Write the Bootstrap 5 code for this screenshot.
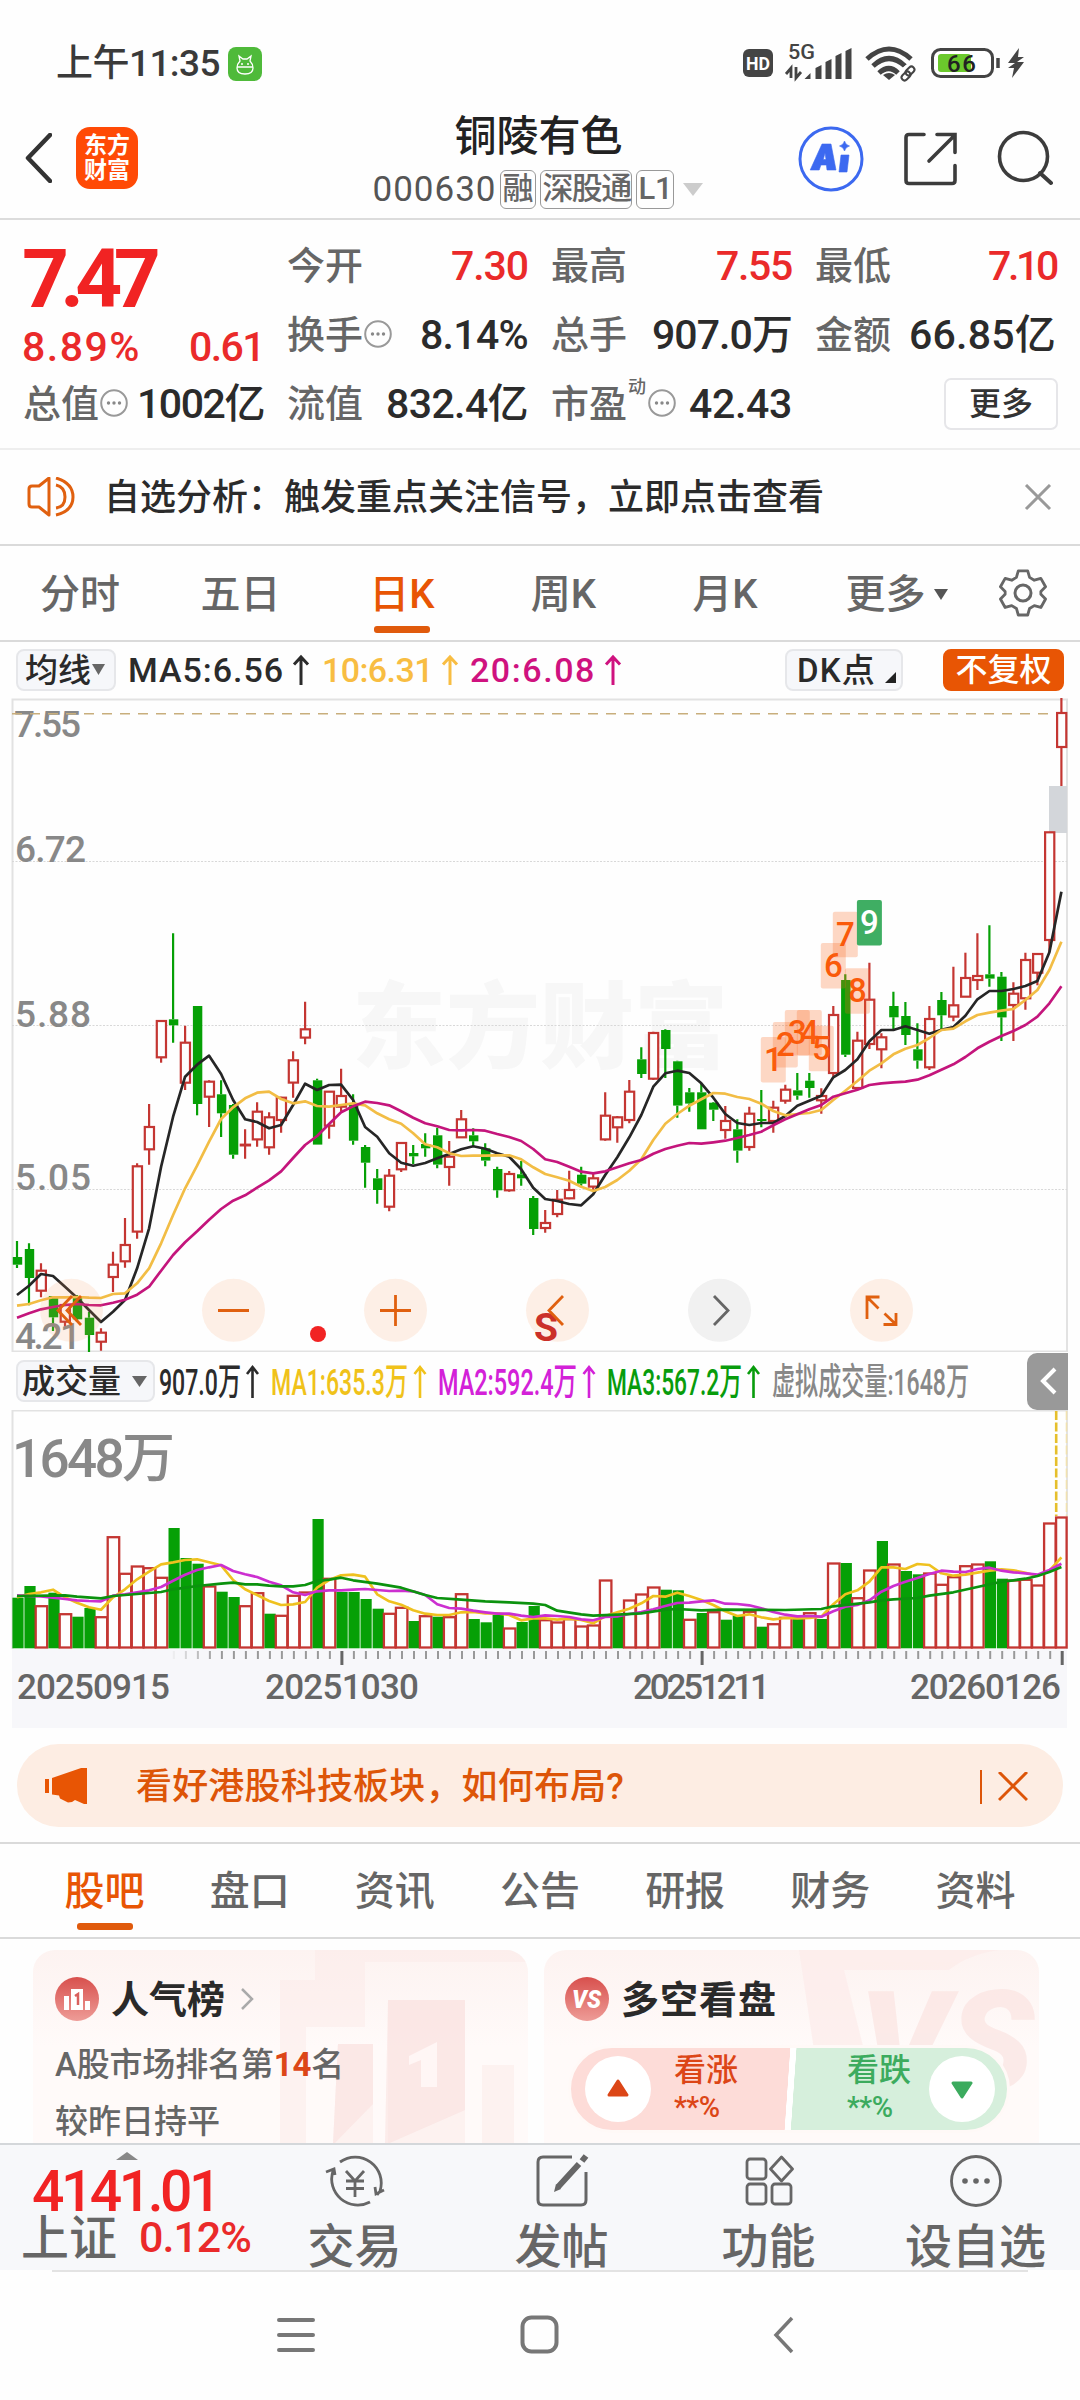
<!DOCTYPE html>
<html lang="zh-CN">
<head>
<meta charset="utf-8">
<meta name="viewport" content="width=device-width, initial-scale=1">
<title>铜陵有色 000630</title>
<link href="https://cdn.jsdelivr.net/npm/bootstrap@5.3.0/dist/css/bootstrap.min.css" rel="stylesheet">
<style>
body{font-family:Roboto,"Noto Sans CJK SC",sans-serif;font-weight:500;color:#2b2b2b;background:#fefefe;width:1080px;height:2400px;overflow:hidden;line-height:1;-webkit-font-smoothing:antialiased}
svg{display:block;flex:none}
svg text{font-family:Roboto,"Noto Sans CJK SC",sans-serif;font-weight:500}
[data-w]{display:inline-block;white-space:nowrap}
.c-up{color:#ea2a2a}
.status-row{height:84px;padding:0 55px 0 56px}
.status-time{font-size:37px;color:#3a3a3a}
.app-head{height:136px;padding:0 27px 0 24px;border-bottom:2px solid #dcdcdc}
.head-side{width:300px}
.brand-tile{width:62px;height:62px;border-radius:14px;background:#ff4a06;color:#fff;font-size:23px;line-height:25px;font-weight:700;padding-top:6px}
.stock-name{font-size:42px;line-height:50px;color:#222}
.stock-code{font-size:35px;font-weight:400;color:#555}
.tagbox{border:1.5px solid #999;border-radius:6px;color:#666;font-size:31px;height:39px;line-height:35px;padding:0 1px}
.quote-grid{display:grid;grid-template-columns:repeat(4,240px);gap:0 24px;grid-template-rows:69px 69px 69px;padding:11px 24px 0;height:230px;border-bottom:2px solid #eee}
.quote-cell{display:flex;justify-content:space-between;align-items:center;font-size:41px;margin-top:1px}
.quote-cell .lab{font-size:38px;color:#666;display:flex;align-items:center;margin-left:-1px}
.price-cell{grid-row:1/3;padding-top:14px;margin-left:-2px}
.big-price{font-size:82px;font-weight:700;line-height:68px;color:#f12323}
.more-btn{border:2px solid #e6e6e9;border-radius:7px;width:114px;height:52px;font-size:32px;line-height:49px;color:#333;text-align:center;background:#fff;margin-right:-2px}
.notice-row{height:96px;padding:2px 28px 0 27px;border-bottom:2px solid #dadada;font-size:36px;color:#2b2b2b}
.period-row{height:96px;border-bottom:2px solid #dadada;font-size:40px;color:#666}
.period-row>div,.sec-row>div{display:flex;flex-direction:column;align-items:center;justify-content:center;position:relative;height:100%;padding-top:3px}
.tab-on{color:#e85504}
.tab-on::after{content:"";position:absolute;bottom:7px;left:50%;margin-left:-28px;width:56px;height:7px;border-radius:3px;background:#e05a0c}
.ma-row{height:56px;padding:0 16px;font-size:34px}
.chip{height:42px;background:#f6f7fa;border:2px solid #e6e7ea;border-radius:8px;display:flex;align-items:center;color:#2a2a2a}
.vol-row{height:58px;padding-left:16px;padding-right:12px}
.fold-btn{width:41px;height:57px;border-radius:10px 0 0 10px;background:#999}
.promo{height:83px;margin:16px 17px 15px;border-radius:42px;background:#fdede3;font-size:36px;color:#dd5508;padding:2px 35px 0 27px}
.sec-row{height:97px;border-top:2px solid #dadada;border-bottom:2px solid #dadada;font-size:40px;color:#666;padding:0 32px}
.sec-row>div{width:145.3px}
.cards-row{height:206px;padding:11px 41px 0 33px;overflow:hidden;gap:16px;border-bottom:2px solid #d4d7da}
.info-card{width:495px;height:240px;border-radius:22px 22px 0 0;background:linear-gradient(#fdf3f1,#fffaf9 40%);position:relative;overflow:hidden;padding:24px 22px}
.info-bg{position:absolute;right:0;top:0}
.info-in{position:relative}
.card-h{font-size:38px;font-weight:700;color:#2a2a2a;padding-top:2px}
.card-p{font-size:33px;color:#666;white-space:nowrap}
.vote-pill{width:442px;height:88px;margin-left:3px;margin-top:21px;border-radius:44px;border:3px solid #fff9f7;overflow:hidden;background:linear-gradient(94deg,#fddcd8 49.6%,#fff 49.7% 51%,#d6efdc 51.1%)}
.vote-btn{width:66px;height:66px;border-radius:50%;background:#fff}
.vote-t{font-size:32px;line-height:36px}
.vote-p{font-size:29px;line-height:38px;letter-spacing:-.5px}
.bottom-bar{height:125px;background:#f7f8fa;overflow:hidden;color:#666}
.idx-cell{width:252px;padding:7px 0 0 21px}
.act-cell{width:207px;padding-top:9px;margin-left:-1px;margin-right:1px}
.act-cell span{font-size:47px;margin-top:14px;line-height:50px;white-space:nowrap}
.sys-nav{height:127px;margin:0 52px;border-top:2px solid #e3e3e3}
</style>
<script src="https://cdn.jsdelivr.net/npm/bootstrap@5.3.0/dist/js/bootstrap.bundle.min.js"></script>
</head>
<body>

<div class="status-row d-flex justify-content-between align-items-end">
  <div class="d-flex align-items-center" style="height:41px">
    <span class="status-time" data-w="164">上午11:35</span>
    <svg class="ms-2" width="34" height="34" viewBox="0 0 34 34"><rect width="34" height="34" rx="8" fill="#4fba3a"/><path d="M11 9l1 5q-3 3-3 7 0 6 8 6t8-6q0-4-3-7l1-5-4 3h-4zM9 20h16" fill="none" stroke="#fff" stroke-width="1.3"/><circle cx="14" cy="17" r="1" fill="#fff"/><circle cx="20" cy="17" r="1" fill="#fff"/></svg>
  </div>
  <svg width="284" height="42" viewBox="741 42 284 42">
    <rect x="743" y="49" width="30" height="28" rx="6" fill="#444"/><text x="746" y="69.500" font-size="18" fill="#fff" style="font-weight:700" textLength="24" lengthAdjust="spacingAndGlyphs">HD</text>
    <text x="788" y="59" font-size="20" fill="#444" textLength="27" lengthAdjust="spacingAndGlyphs">5G</text>
    <path d="M791 78V68l-5 6M796 67v11l5-6" fill="none" stroke="#444" stroke-width="2.800"/>
    <path d="M804.500 79l6-6v6zM815.500 79V68l6-3v14zM825.500 79V62l6-3v20zM835.500 79V56l6-3v26zM845.500 79V51l6-3v31z" fill="#444"/>
    <g fill="none" stroke="#444" stroke-width="5"><path d="M867 59q22-20 44 0M873 66q16-15 32 0M879 73q10-9 19 0"/></g><path d="M883 75q6-4 12 0l-6 5z" fill="#444"/>
    <g fill="none" stroke="#fff" stroke-width="5"><rect x="902" y="68" width="12" height="9" rx="4.500" transform="rotate(-45 908 73)"/></g>
    <g fill="none" stroke="#444" stroke-width="2"><rect x="901" y="73" width="10" height="6" rx="3" transform="rotate(-45 906 76)"/><rect x="905" y="68" width="10" height="6" rx="3" transform="rotate(-45 910 71)"/></g>
    <rect x="932.500" y="49.500" width="60" height="27" rx="8" fill="#fff" stroke="#444" stroke-width="3"/><rect x="938" y="54" width="33" height="18" rx="3" fill="#6bc92c"/><path d="M998 58v10" stroke="#444" stroke-width="3.500"/>
    <text x="947" y="72" font-size="24" fill="#222" textLength="29">66</text>
    <path d="M1019 48l-11 15h7l-7 5h6l-2 10 12-16h-7l7-5h-6z" fill="#444"/>
  </svg>
</div>

<div class="app-head d-flex justify-content-between align-items-start">
  <div class="head-side d-flex align-items-center" style="margin-top:43px">
    <svg width="28" height="50" viewBox="0 0 28 50"><path d="M26 2L4 25l22 23" fill="none" stroke="#333" stroke-width="4.500" stroke-linecap="round" stroke-linejoin="round"/></svg>
    <div class="brand-tile text-center ms-4">东方<br>财富</div>
  </div>
  <div class="text-center" style="margin-top:28px">
    <div class="stock-name">铜陵有色</div>
    <div class="d-flex align-items-center justify-content-center" style="gap:4px;margin-top:8px">
      <span class="stock-code" data-w="124">000630</span><span class="tagbox" data-w="36">融</span><span class="tagbox" data-w="92">深股通</span><span class="tagbox" data-w="38">L1</span>
      <svg class="ms-1" width="22" height="14"><path d="M1 0h20L11 13z" fill="#ccc"/></svg>
    </div>
  </div>
  <div class="head-side d-flex align-items-center justify-content-end" style="margin-top:41px">
    <svg width="255" height="68" viewBox="798 124 255 68" fill="none">
      <circle cx="831" cy="158" r="31" stroke="#3c69f0" stroke-width="3"/>
      <path d="M822 143h9l5 26h-9l-.6-5h-5.500l-1.700 5h-9zM825 152l-1.700 6.500h2.700zM841 154h8l-2 17h-8zM844.500 140q1 4 5 5-4 1-5 5-1-4-5-5 4-1 5-5z" fill="#3c69f0" fill-rule="evenodd" stroke="#3c69f0" stroke-width=".6"/>
      <path d="M924 133.500h-15q-3 0-3 3v43q0 3 3 3h43q3 0 3-3v-15M937 133.500h18v18M954 135l-25 25" stroke="#3c3c3c" stroke-width="3.600" stroke-linecap="round"/>
      <circle cx="1023.500" cy="155.500" r="24" stroke="#3c3c3c" stroke-width="3.600"/><path d="M1040 172l11 10" stroke="#3c3c3c" stroke-width="4" stroke-linecap="round"/>
    </svg>
  </div>
</div>

<div class="quote-grid">
  <div class="price-cell">
    <div class="big-price" data-w="130">7.47</div>
    <div class="d-flex justify-content-between c-up" style="font-size:41px;margin-top:14px"><span data-w="119">8.89%</span><span data-w="75">0.61</span></div>
  </div>
  <div class="quote-cell"><span class="lab">今开</span><span class="c-up" data-w="77">7.30</span></div>
  <div class="quote-cell"><span class="lab">最高</span><span class="c-up" data-w="76">7.55</span></div>
  <div class="quote-cell"><span class="lab">最低</span><span class="c-up" data-w="68">7.10</span></div>
  <div class="quote-cell"><span class="lab">换手<svg width="28" height="30" viewBox="0 0 28 30" style="margin-left:1px"><use href="#dots"/></svg></span><span data-w="108">8.14%</span></div>
  <div class="quote-cell"><span class="lab">总手</span><span data-w="140">907.0万</span></div>
  <div class="quote-cell"><span class="lab">金额</span><span data-w="147">66.85亿</span></div>
  <div class="quote-cell"><span class="lab">总值<svg width="28" height="30" viewBox="0 0 28 30" style="margin-left:1px"><use href="#dots"/></svg></span><span data-w="127">1002亿</span></div>
  <div class="quote-cell"><span class="lab">流值</span><span data-w="142">832.4亿</span></div>
  <div class="quote-cell"><span class="lab">市盈<span style="font-size:18px;margin:-34px 2px 0 1px">动</span><svg width="28" height="30" viewBox="0 0 28 30"><use href="#dots"/></svg></span><span data-w="103">42.43</span></div>
  <div class="quote-cell justify-content-end"><div class="more-btn">更多</div></div>
</div>
<svg width="0" height="0" class="position-absolute"><symbol id="dots" viewBox="0 0 28 30"><circle cx="14" cy="14" r="12.800" fill="none" stroke="#999" stroke-width="2"/><g fill="#888"><circle cx="8.500" cy="14" r="1.700"/><circle cx="14" cy="14" r="1.700"/><circle cx="19.500" cy="14" r="1.700"/></g></symbol></svg>

<div class="notice-row d-flex align-items-center">
  <svg width="48" height="42" viewBox="27 478 48 42" fill="none" stroke="#e0600f" stroke-width="3"><path d="M49 479v37l-10-8h-7q-3 0-3-3v-15q0-3 3-3h7zM56 479q17 5 17 19t-17 18M56 486q9 2 9 12t-9 11" stroke-linejoin="round"/></svg>
  <span style="margin-left:29px" data-w="720">自选分析：触发重点关注信号，立即点击查看</span>
  <svg class="ms-auto" width="28" height="28"><path d="M2 1l24 24M26 1L2 25" stroke="#999" stroke-width="3"/></svg>
</div>

<div class="period-row d-flex align-items-center">
  <div style="width:160px">分时</div><div style="width:161px">五日</div><div class="tab-on" style="width:162px">日K</div><div style="width:161px">周K</div><div style="width:162px">月K</div>
  <div style="width:181px"><span class="d-flex align-items-center">更多<svg class="ms-2" width="14" height="12"><path d="M0 0h14L7 11z" fill="#555"/></svg></span></div>
  <svg style="margin-left:11px" width="50" height="52" viewBox="0 0 50 52" fill="none" stroke="#666" stroke-width="3" stroke-linejoin="round"><path d="M20 3h10l2 7 5 3 7-2 5 9-5 5v3l5 5-5 9-7-2-5 3-2 7H20l-2-7-5-3-7 2-5-9 5-5v-3l-5-5 5-9 7 2 5-3z" transform="translate(1.500 1) scale(.94)"/><circle cx="25" cy="26" r="8"/></svg>
</div>

<div class="ma-row d-flex align-items-center">
  <div class="chip" style="width:100px;padding-left:7px;font-size:33px">均线<svg width="15" height="12"><path d="M1 0h13L7.500 11z" fill="#666"/></svg></div>
  <span style="margin-left:12px" data-w="156">MA5:6.56</span><svg style="margin:0 12px 0 8px" width="18" height="32"><use href="#arr" stroke="#2b2b2b"/></svg>
  <span style="color:#f8bd42" data-w="111">10:6.31</span><svg style="margin:0 11px 0 8px" width="18" height="32"><use href="#arr" stroke="#f8bd42"/></svg>
  <span style="color:#cf127f" data-w="126">20:6.08</span><svg style="margin-left:8px" width="18" height="32"><use href="#arr" stroke="#cf127f"/></svg>
  <div class="chip ms-auto" style="width:118px;padding-left:10px;font-size:33px"><span data-w="79">DK点</span><svg class="mt-3" style="margin-left:9px" width="12" height="12"><path d="M11 0v11H0z" fill="#222"/></svg></div>
  <div class="chip justify-content-center text-white" style="width:121px;margin-left:40px;background:#e85504;border-color:#e85504;font-size:32px">不复权</div>
</div>
<svg width="0" height="0" class="position-absolute"><symbol id="arr" viewBox="0 0 18 32"><path d="M9 31V3M2 10.500L9 3l7 7.500" fill="none" stroke-width="3"/></symbol></svg>

<svg id="kchart" width="1080" height="654" viewBox="0 698 1080 654"></svg>

<div class="vol-row d-flex align-items-center">
  <div class="chip" style="width:139px;padding-left:4px;font-size:33px">成交量<svg class="ms-auto me-1" width="18" height="13"><path d="M1 1h15L8.500 12z" fill="#666"/></svg></div>
  <svg width="872" height="58" viewBox="155 1352 872 58" font-size="37">
    <text x="159" y="1395" textLength="82" lengthAdjust="spacingAndGlyphs" fill="#2b2b2b">907.0万</text>
    <text x="271" y="1395" textLength="137" lengthAdjust="spacingAndGlyphs" fill="#f0c21a">MA1:635.3万</text>
    <text x="438" y="1395" textLength="139" lengthAdjust="spacingAndGlyphs" fill="#d321d8">MA2:592.4万</text>
    <text x="607" y="1395" textLength="135" lengthAdjust="spacingAndGlyphs" fill="#089c0c">MA3:567.2万</text>
    <text x="772" y="1395" textLength="197" lengthAdjust="spacingAndGlyphs" fill="#888">虚拟成交量:1648万</text>
    <g fill="none" stroke-width="2.600"><path d="M252.500 1398v-30M247 1374l5.500-7 5.500 7" stroke="#2b2b2b"/><path d="M420 1398v-30M414.500 1374l5.500-7 5.500 7" stroke="#f0c21a"/><path d="M589 1398v-30M583.500 1374l5.500-7 5.500 7" stroke="#d321d8"/><path d="M753.500 1398v-30M748 1374l5.500-7 5.500 7" stroke="#089c0c"/></g>
  </svg>
  <div class="fold-btn d-flex align-items-center justify-content-center"><svg width="18" height="28"><path d="M16 2L4 14l12 12" fill="none" stroke="#fff" stroke-width="4"/></svg></div>
</div>

<svg id="vchart" width="1080" height="318" viewBox="0 1410 1080 318"></svg>

<div class="promo d-flex align-items-center">
  <svg width="44" height="38" viewBox="0 1 44 38" fill="#e85504"><path d="M1 12h4v14H1zM8 11L40 0h3v37h-3l-9-4-3 2-4 .5-8-4-1-3-7-1z"/></svg>
  <span style="margin-left:48px" data-w="488">看好港股科技板块，如何布局?</span>
  <div class="ms-auto d-flex align-items-center" style="gap:16px"><svg width="2" height="34"><path d="M1 0v34" stroke="#dd5508" stroke-width="2"/></svg><svg width="30" height="30"><path d="M1 0l28 28M29 0L1 28" stroke="#dd5508" stroke-width="3"/></svg></div>
</div>

<div class="sec-row d-flex">
  <div class="tab-on">股吧</div><div>盘口</div><div>资讯</div><div>公告</div><div>研报</div><div>财务</div><div>资料</div>
</div>

<div class="cards-row d-flex">
  <div class="info-card">
    <svg class="info-bg" width="260" height="195"><g fill="#fbe9e7" opacity=".5"><path d="M47 0H260v12H97v65H38V195H12V30h35zM70 94h35v101H65zM120 50h77v145h-77zM214 115h32v80h-32z"/></g><g fill="#f9dedb" opacity=".5"><path d="M70 94h35v60L65 195zM120 50h77v110l-80 35z"/></g><path d="M141 106l28-14v45h-16v-27l-12 5z" fill="#fff6f5"/></svg>
    <div class="info-in">
      <div class="d-flex align-items-center" style="height:50px">
        <svg width="44" height="44"><defs><linearGradient id="rg" x2="0" y2="1"><stop stop-color="#d8504d"/><stop offset="1" stop-color="#ee9c97"/></linearGradient></defs><circle cx="22" cy="22" r="22" fill="url(#rg)"/><path d="M9 19h5v14H9zM16 12h12v21H16zM30 24h5v9h-5z" fill="#fff"/><path d="M20 19l3-2v11" fill="none" stroke="#d9605d" stroke-width="2.500"/></svg>
        <span class="card-h" style="margin-left:12px">人气榜</span>
        <svg style="margin-left:15px" width="14" height="22"><path d="M2 1l10 10L2 21" fill="none" stroke="#aaa" stroke-width="2.500"/></svg>
      </div>
      <div class="card-p" style="margin-top:24px" data-w="289">A股市场排名第<b style="color:#dc4617">14</b>名</div>
      <div class="card-p" style="margin-top:24px">较昨日持平</div>
    </div>
  </div>
  <div class="info-card">
    <svg class="info-bg" width="245" height="195"><path d="M5 0h200q-30 4-50 20H50l20 80H20z" fill="#fcebe9" opacity=".7"/><text x="65" y="140" font-size="138" textLength="175" lengthAdjust="spacingAndGlyphs" fill="#f9dedb" opacity=".55" style="font-weight:900;font-style:italic">VS</text></svg>
    <div class="info-in" style="margin-left:-1px">
      <div class="d-flex align-items-center" style="height:50px">
        <svg width="44" height="44"><circle cx="22" cy="22" r="22" fill="url(#rg)"/><text x="7" y="31" font-size="25" fill="#fff" textLength="29" lengthAdjust="spacingAndGlyphs" style="font-weight:900;font-style:italic">VS</text></svg>
        <span class="card-h" style="margin-left:12px" data-w="156">多空看盘</span>
      </div>
      <div class="vote-pill d-flex align-items-center">
        <div class="vote-btn d-flex align-items-center justify-content-center" style="margin-left:14px"><svg width="24" height="20"><path d="M12 2l9 14H3z" fill="#dc4617" stroke="#dc4617" stroke-width="3" stroke-linejoin="round"/></svg></div>
        <div style="color:#dc4617;width:196px;padding-left:23px"><div class="vote-t">看涨</div><div class="vote-p">**%</div></div>
        <div style="color:#3cab5e;width:82px"><div class="vote-t">看跌</div><div class="vote-p">**%</div></div>
        <div class="vote-btn d-flex align-items-center justify-content-center"><svg width="24" height="20"><path d="M12 18l9-14H3z" fill="#3cab5e" stroke="#3cab5e" stroke-width="3" stroke-linejoin="round"/></svg></div>
      </div>
    </div>
  </div>
</div>

<div class="bottom-bar d-flex">
  <div class="idx-cell">
    <svg style="margin-left:94px" width="24" height="8"><path d="M12 0l11 8H1z" fill="#888"/></svg>
    <div style="font-size:57px;line-height:57px;color:#f12323;margin:3px 0 0 11px;height:39px" data-w="186">4141.01</div>
    <div class="d-flex align-items-start"><span style="font-size:48px;line-height:50px">上证</span><span class="c-up" style="font-size:43px;line-height:47px;margin-left:22px" data-w="112">0.12%</span></div>
  </div>
  <div class="act-cell d-flex flex-column align-items-center">
    <svg width="62" height="56" viewBox="0 0 62 56" fill="none" stroke="#666" stroke-width="2.800"><path d="M16 8A26 26 0 0 1 56 37l-3 4M60 36l-8 4-1-7M46 48A26 26 0 0 1 9 17M2 18l8-3 1 6M22 17l9 10 9-10M31 27v16M22 27h18M22 34.500h18"/></svg><span style="margin-top:12px">交易</span></div>
  <div class="act-cell d-flex flex-column align-items-center">
    <svg width="54" height="54" viewBox="0 0 54 54" fill="none" stroke="#666" stroke-width="3"><path d="M37 3H8q-5 0-5 5v38q0 5 5 5h38q5 0 5-5V18"/><path d="M23 33L44 10M47 7l4-5" stroke-width="6"/><path d="M19 38l2-8 5 5z" fill="#666" stroke="none"/></svg><span>发帖</span></div>
  <div class="act-cell d-flex flex-column align-items-center">
    <svg width="50" height="54" viewBox="0 0 50 54" fill="none" stroke="#666" stroke-width="2.800"><rect x="3" y="5" width="19" height="20" rx="3"/><rect x="3" y="30" width="19" height="20" rx="3"/><rect x="28" y="30" width="19" height="20" rx="3"/><path d="M37.500 3l11 12-11 12-11-12z" stroke-linejoin="round"/></svg><span>功能</span></div>
  <div class="act-cell d-flex flex-column align-items-center">
    <svg width="54" height="54"><circle cx="27" cy="27" r="24.500" fill="none" stroke="#666" stroke-width="2.800"/><g fill="#666"><circle cx="16" cy="27" r="2.800"/><circle cx="27" cy="27" r="2.800"/><circle cx="38" cy="27" r="2.800"/></g></svg><span>设自选</span></div>
</div>

<div class="sys-nav d-flex align-items-center">
  <svg style="margin-left:225px" width="38" height="38" fill="none" stroke="#777" stroke-width="4" stroke-linecap="round"><path d="M2 4h34M2 19h34M2 34h34"/></svg>
  <svg style="margin-left:205px" width="40" height="40"><rect x="2.500" y="2.500" width="34" height="34" rx="9" fill="none" stroke="#777" stroke-width="4"/></svg>
  <svg style="margin-left:213px" width="22" height="38"><path d="M19 2L3 19l16 17" fill="none" stroke="#777" stroke-width="3.500"/></svg>
</div>

<script>
document.querySelectorAll('[data-w]').forEach(function(e){
  var n=e.textContent.length, w=e.getBoundingClientRect().width;
  e.style.letterSpacing=((+e.dataset.w-w)/n).toFixed(2)+'px';
});

// Daily bars: direction, high, body top, body bottom, low (thirds of a pixel below y=1000)
var K='g723,771,794,804 g730,747,834,916 r790,812,872,892 g888,888,952,993 r910,915,965,980 g885,892,958,965 g935,953,1005,1057 r985,998,1025,1052 r755,794,831,876 r654,735,784,803 r490,499,695,716 r312,381,448,494 r63,63,172,188 g-200,58,76,128 r77,128,248,270 g18,18,312,346 r241,245,290,381 g241,283,340,411 g312,315,464,476 r388,434,436,476 r307,335,418,440 r337,352,442,464 r290,293,360,398 r154,181,248,293 r5,88,113,133 g236,241,434,434 r275,275,377,416 r206,288,320,335 g283,315,422,434 g435,441,488,563 g507,535,570,611 r507,527,620,634 r428,429,508,516 g435,459,469,492 g400,432,445,470 g383,406,494,505 r423,470,501,557 r330,358,412,412 g385,406,424,440 g430,445,482,499 g500,507,571,593 r513,522,571,575 g483,523,535,557 g588,594,687,705 r630,669,684,698 r570,599,642,652 r512,570,595,598 g500,524,551,557 r520,535,560,572 r277,347,418,422 r348,352,382,428 r240,275,360,370 g142,178,222,234 r95,99,236,240 g88,90,147,234 g182,184,317,353 g264,277,311,335 g250,277,388,388 g306,308,329,363 r318,363,390,416 g358,388,452,488 r320,341,441,452 g270,357,361,382 r302,323,363,398 r254,269,302,311 g219,271,287,299 g219,242,264,293 r265,288,301,341 r18,45,219,230 g-77,-60,164,171 r95,122,264,270 r-112,-1,132,147 r100,112,148,205 g-25,18,52,88 g6,48,105,135 g70,148,182,206 r18,57,202,210 g-24,0,46,88 r-100,16,50,64 r-142,-66,-10,-10 r-200,-72,-60,-30 g-224,-77,-64,-40 g-84,-70,52,123 r-53,-19,15,123 r-142,-120,-5,29 r-138,-138,-82,-44 r-503,-503,-180,-144 r-907,-861,-759,-642'.split(' ');
var M5=[885,857,822,828,860,893,930,966,935,900,805,685,500,350,230,194,167,222,300,358,366,385,375,315,251,270,255,254,300,381,410,460,488,497,489,475,462,448,439,446,460,470,508,563,597,603,612,616,583,525,472,412,345,260,220,212,219,250,293,342,369,375,369,369,348,317,302,287,232,210,178,124,90,90,79,90,101,89,81,47,-2,-27,-27,-33,-42,-57,-143,-325];
var M10=[917,912,901,892,892,891,893,894,882,880,850,805,730,645,565,497,425,357,322,295,278,275,297,310,304,318,320,315,310,316,340,358,371,400,433,442,460,468,467,467,466,466,478,502,522,532,542,560,573,561,540,512,478,420,371,342,317,298,279,281,291,297,311,333,346,342,339,330,300,272,243,212,190,163,146,135,114,90,86,64,45,38,32,27,0,-30,-90,-175];
var M20=[953,940,928,921,915,912,915,916,908,899,884,860,812,765,727,694,659,627,602,586,563,541,514,474,435,408,372,337,319,305,309,316,334,353,370,379,390,391,390,392,402,411,423,447,478,486,500,515,520,514,502,490,480,461,447,437,429,431,427,422,414,405,395,376,358,343,328,315,290,280,269,255,250,247,245,239,226,209,193,171,145,125,108,93,75,50,10,-41];
// Volume bar tops and averages (thirds of a pixel below y=1400)
var V=[593,558,617,578,641,650,624,650,410,520,498,503,532,384,474,491,558,575,591,617,578,641,646,586,576,357,535,576,576,597,626,640,622,663,647,650,650,581,657,667,645,684,666,618,659,666,656,678,675,540,645,600,582,561,569,571,658,639,635,659,647,634,680,671,652,655,638,657,489,489,593,510,423,492,513,523,519,553,530,497,492,484,536,540,538,555,369,351];
var VG=[0,1,3,5,6,13,14,15,17,18,21,25,27,28,29,30,33,35,38,39,40,42,43,50,54,55,57,59,60,62,65,67,69,72,74,75,81,82];
var V1=[592,582,577,569,592,608,622,629,592,568,538,515,493,487,480,478,487,496,540,568,585,603,615,613,606,563,540,526,524,530,583,604,614,631,641,645,645,637,636,640,640,645,661,655,655,659,656,660,670,648,637,626,610,588,590,578,588,600,615,634,648,643,652,658,654,655,654,650,613,583,571,545,502,502,507,492,495,520,527,524,518,512,508,511,518,527,512,472];
var V2=[586,588,589,593,597,601,603,604,587,583,577,571,561,542,524,510,502,495,513,523,531,545,556,577,585,574,571,571,569,567,570,573,572,574,585,613,624,626,632,637,641,641,647,651,646,648,651,658,661,651,649,642,636,628,618,609,608,604,601,611,612,616,625,636,644,649,648,650,634,620,615,601,575,558,545,534,522,512,515,516,507,503,512,517,520,524,510,491];
var V3=[[0,588],[4,586],[5,590],[7,595],[8,588],[9,585],[12,576],[13,568],[15,558],[17,551],[18,548],[19,553],[20,553],[21,557],[22,559],[23,559],[24,555],[25,543],[26,539],[27,533],[28,541],[30,551],[32,563],[34,585],[35,594],[37,599],[39,604],[41,607],[43,611],[44,615],[45,632],[47,643],[48,647],[50,644],[52,640],[54,629],[55,627],[57,631],[59,629],[64,630],[67,627],[68,619],[71,607],[72,601],[73,598],[75,594],[76,587],[78,577],[80,561],[82,545],[83,541],[84,536],[85,528],[86,516],[87,501]];
var X=function(i){return 17+12.005*i}, f=function(n){return n.toFixed(1)};
var R='#c43632', G='#06a006';
function line(a,base,c){return '<polyline fill="none" stroke="'+c+'" stroke-width="2.700" stroke-linejoin="round" points="'+a.map(function(v,i){var p=Array.isArray(v)?v:[i,v];return f(X(p[0]))+','+f(base+p[1]/3)}).join(' ')+'"/>'}
function txt(x,y,w,s,t,c,extra){return '<text x="'+x+'" y="'+y+'" textLength="'+w+'" font-size="'+s+'" fill="'+c+'" '+(extra||'')+'>'+t+'</text>'}

var h='<text x="352" y="1061" font-size="94" textLength="376" fill="#f7f7f7" style="font-weight:900">东方财富</text>';
h+='<path d="M12.500 1352V699.500H1067V1351.500H12.500" fill="none" stroke="#e2e2e2" stroke-width="2"/>';
[861.5,1025.5,1189.5].forEach(function(y){h+='<path d="M12 '+y+'H1067" stroke="#d8d8d8" stroke-width="1.200" stroke-dasharray="2 1.500"/>'});
h+=txt(14,737,67,37,'7.55','#888')+txt(15,862,71,37,'6.72','#888')+txt(15,1026.5,76,37,'5.88','#888')+txt(15,1189.500,76,37,'5.05','#888');
h+='<path d="M12 713.700H1050" stroke="#c8ae7c" stroke-width="1.600" stroke-dasharray="10 8"/>';
h+='<rect x="1049" y="786" width="18" height="47" fill="#d3d6da"/>';
K.forEach(function(s,i){
  var p=s.slice(1).split(',').map(function(v){return 1000+v/3}), x=X(i), c=s[0]=='g'?G:R;
  h+='<path d="M'+f(x)+' '+f(p[0])+'V'+f(p[1])+'M'+f(x)+' '+f(p[2])+'V'+f(p[3])+'" stroke="'+c+'" stroke-width="2.200"/>';
  if(c==G) h+='<rect x="'+f(x-4.2)+'" y="'+f(p[1])+'" width="9.400" height="'+f(Math.max(p[2]-p[1],2))+'" fill="'+c+'"/>';
  else h+='<rect x="'+f(x-4.3)+'" y="'+f(p[1])+'" width="9.200" height="'+f(p[2]-p[1])+'" fill="#fefefe" stroke="'+c+'" stroke-width="2.200"/>';
});
h+=line(M5,1000,'#262626')+line(M10,1000,'#f2bd45')+line(M20,1000,'#c4157c');
[[63,111],[64,66],[65,30],[66,30],[67,77],[68,-171],[69,-265],[70,-95],[71,-300]].forEach(function(b,k){
  var x=X(b[0]), y=1000+b[1]/3, g=k==8;
  h+='<rect x="'+f(x-12.5)+'" y="'+f(y)+'" width="25" height="45.500" rx="2" fill="'+(g?'#3fae63':'#fb6a20')+'" opacity="'+(g?1:.26)+'"/>';
  h+='<text x="'+f(x)+'" y="'+f(y+34)+'" font-size="33" text-anchor="middle" fill="'+(g?'#fff':'#fa5a0a')+'">'+(k+1)+'</text>';
});
h+=txt(15,1349,66,37,'4.21','#888');
for(var k=0;k<6;k++) h+='<circle cx="'+(71.5+162*k)+'" cy="1310.300" r="31.500" fill="'+(k==4?'#e4e4e4':'#fb9a60')+'" opacity="'+(k==4?.5:.15)+'"/>';
h+='<text x="534" y="1341" font-size="39" textLength="24" lengthAdjust="spacingAndGlyphs" fill="#cb3029" style="font-weight:700">S</text><circle cx="318" cy="1334" r="8" fill="#f12323"/>';
h+='<g fill="none" stroke="#e0600f" stroke-width="2.800"><path d="M72 1296l-14 14.500 14 14.500M81 1296l-14 14.500 14 14.500M218 1310.500h31M380 1310.500h31M395.500 1295v31M563 1296l-14 14.500 14 14.500M867 1319v-22h12.500M867.500 1297.500l11 11M896 1313v11.500h-12.500M895.500 1324l-11-10.500"/><path d="M714 1296l14 14.500-14 14.500" stroke="#666"/></g>';
document.getElementById('kchart').innerHTML=h;

h='<path d="M12.500 1649V1410.500H1067V1649" fill="none" stroke="#e2e2e2" stroke-width="2"/><rect x="12" y="1649" width="1055" height="79" fill="#f7f7fa"/>';
h+=txt(12,1477,163,53,'1648万','#888');
V.forEach(function(v,i){
  var x=X(i), y=1400+v/3, g=VG.indexOf(i)>=0;
  if(g) h+='<rect x="'+f(x-4.6)+'" y="'+f(y)+'" width="11.200" height="'+f(1648.3-y)+'" fill="'+G+'"/>';
  else h+='<rect x="'+f(x-5.3)+'" y="'+f(y+.5)+'" width="'+(i==87?10.5:11.5)+'" height="'+f(1647-y)+'" fill="#fefefe" stroke="'+R+'" stroke-width="2.300"/>';
});
h+=line(V1,1400,'#efc11f')+line(V2,1400,'#cc2fd0')+line(V3,1400,'#0b920e');
h+='<path d="M1056.200 1411V1516" stroke="#e6bf2c" stroke-width="2.600" stroke-dasharray="9 2.500"/><path d="M1066.500 1411V1516" stroke="#f1e2b0" stroke-width="1.600" stroke-dasharray="9 2.500"/>';
for(var i=13;i<88;i++){var m=(i-27)%30==0; h+='<path d="M'+f(X(i)+.8)+' 1651v'+(m?14:8)+'" stroke="'+(m?'#666':'#999')+'" stroke-width="'+(m?3:2)+'" opacity="'+Math.min(1,(i-12.6)/4)+'"/>'}
h+=txt(17,1698.5,153,35,'20250915','#666')+txt(265,1698.5,154,35,'20251030','#666')+txt(633,1698.5,137,35,'20251211','#666')+txt(910,1698.5,151,35,'20260126','#666');
document.getElementById('vchart').innerHTML=h;
</script>
</body>
</html>
